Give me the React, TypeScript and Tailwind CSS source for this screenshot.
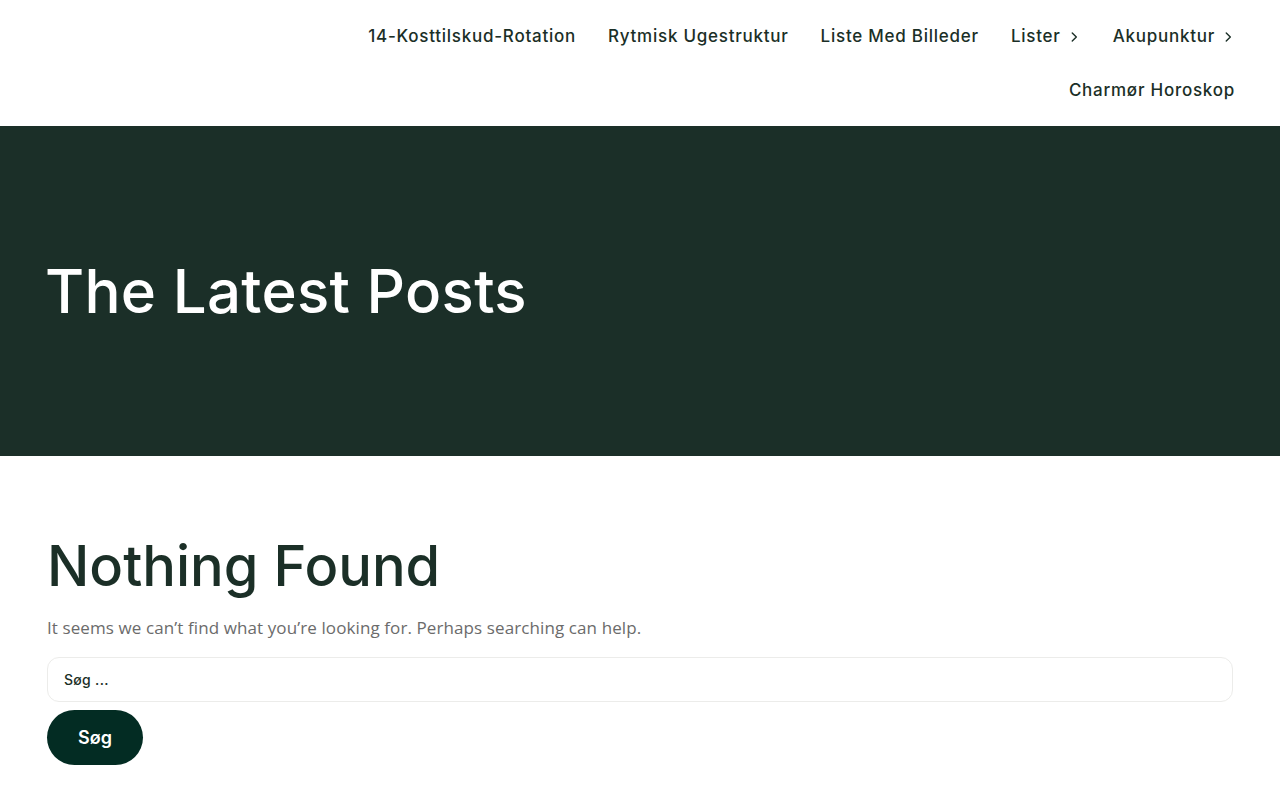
import React from 'react';

const Chevron = () => (
  <svg width="14" height="14" viewBox="0 0 24 24" fill="none" stroke="currentColor" strokeWidth="2.4" strokeLinecap="round" strokeLinejoin="round" className="ml-1.5">
    <path d="M9 5l7 7-7 7" />
  </svg>
);

const navItems: { label: string; sub?: boolean }[] = [
  { label: '14-Kosttilskud-Rotation' },
  { label: 'Rytmisk Ugestruktur' },
  { label: 'Liste Med Billeder' },
  { label: 'Lister', sub: true },
  { label: 'Akupunktur', sub: true },
  { label: 'Charmør Horoskop' },
];

const heading = { fontFamily: 'Inter, "DejaVu Sans", sans-serif' };
const body = { fontFamily: '"Open Sans", "Noto Sans", sans-serif' };

export default function App() {
  return (
    <div className="min-h-[800px] bg-white" style={heading}>
      <header className="flex h-[126px] justify-end px-[45px] pt-[10px]">
        <nav className="flex w-[920px] flex-wrap content-start justify-end gap-x-[32px]">
          {navItems.map((item) => (
            <a
              key={item.label}
              className="flex h-[54px] items-center text-[17px] font-medium tracking-[0.75px] text-[#1b2f27]"
            >
              {item.label}
              {item.sub && <Chevron />}
            </a>
          ))}
        </nav>
      </header>

      <section className="flex h-[330px] items-center bg-[#1b2f28] px-[45px]">
        <h1 className="text-[60px] font-medium leading-none tracking-[0.3px] text-white">The Latest Posts</h1>
      </section>

      <main className="px-[47px] pt-[82px]">
        <h2 className="text-[56px] font-medium leading-none text-[#1b2f27]">Nothing Found</h2>
        <p className="mt-[21px] text-[17px] leading-[26px] tracking-[0.1px] text-[#6b6b6b]" style={body}>
          It seems we can’t find what you’re looking for. Perhaps searching can help.
        </p>
        <div className="mt-[16px] flex h-[45px] items-center rounded-[12px] border border-[#ececea] px-[16px]">
          <span className="text-[14px] font-medium tracking-[0.3px] text-[#1b2f27]">Søg ...</span>
        </div>
        <button className="mt-[8px] h-[55px] w-[96px] rounded-full bg-[#032c23] text-[18px] font-semibold text-white">
          Søg
        </button>
      </main>
    </div>
  );
}
